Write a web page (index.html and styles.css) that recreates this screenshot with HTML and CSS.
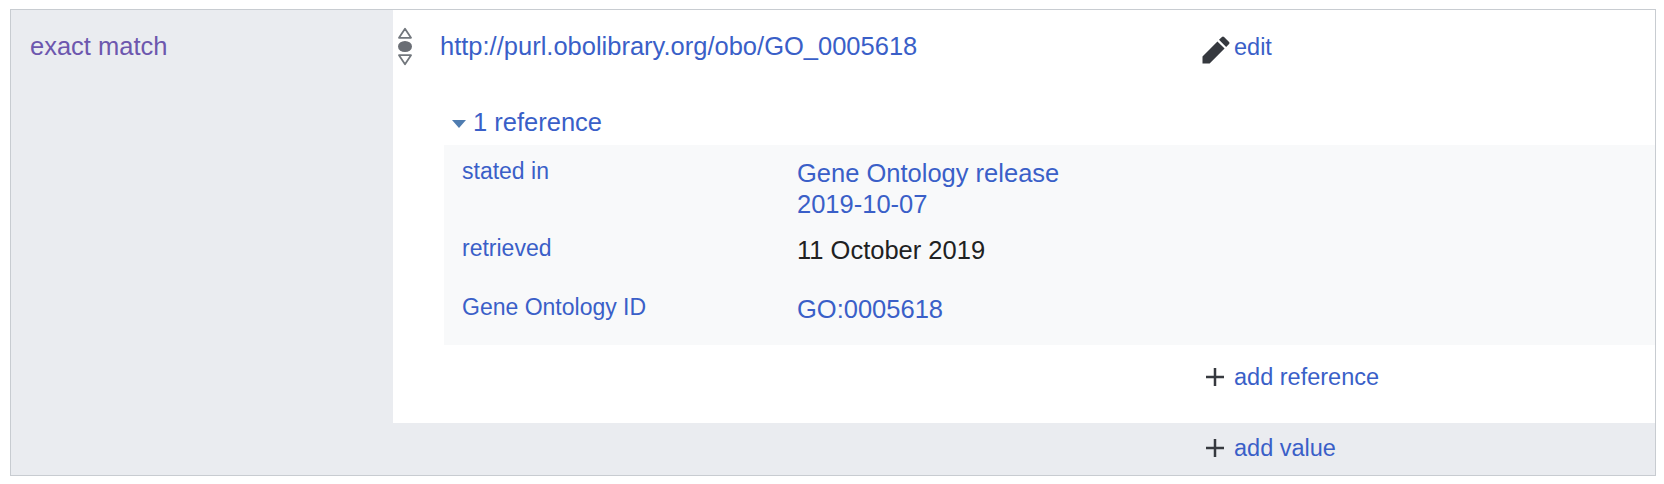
FILE: index.html
```html
<!DOCTYPE html>
<html lang="en">
<head>
  <meta charset="UTF-8">
  <title>exact match</title>
  <link rel="stylesheet" href="styles.css">
</head>
<body>

<div class="statement-group">
  <!-- Property name -->
  <div class="property"><a href="#">exact match</a></div>

  <div class="values">
    <div class="statement">
      <div class="claim">
        <svg class="rank" width="14" height="39" viewBox="0 0 14 39">
          <path d="M1 10.8 L7 1.8 L13 10.8 Z" fill="none" stroke="#72777d" stroke-width="1.8" stroke-linejoin="round"/>
          <ellipse cx="7" cy="19.5" rx="7" ry="5.6" fill="#6a6e75"/>
          <path d="M1 28.2 L7 37.2 L13 28.2 Z" fill="none" stroke="#72777d" stroke-width="1.8" stroke-linejoin="round"/>
        </svg>
        <a class="value" href="#">http://purl.obolibrary.org/obo/GO_0005618</a>
        <div class="action edit-action">
          <svg class="icon" width="30" height="30" viewBox="0 0 20 20">
            <path d="M16.77 8l1.94-2a1 1 0 0 0 0-1.41l-3.34-3.3a1 1 0 0 0-1.41 0L12 3.23zM1 14.25V19h4.75l9.96-9.96-4.75-4.75z" fill="#36393f"/>
          </svg>
          <a href="#">edit</a>
        </div>
      </div>

      <div class="references">
        <a class="toggle" href="#"><span class="arrow"></span>1 reference</a>
        <div class="ref-box">
          <div class="ref-row">
            <a class="ref-prop" href="#">stated in</a>
            <a class="ref-val" href="#">Gene Ontology release<br>2019-10-07</a>
          </div>
          <div class="ref-row">
            <a class="ref-prop" href="#">retrieved</a>
            <span class="ref-val">11 October 2019</span>
          </div>
          <div class="ref-row">
            <a class="ref-prop" href="#">Gene Ontology ID</a>
            <a class="ref-val" href="#">GO:0005618</a>
          </div>
        </div>
      </div>

      <div class="action add-reference">
        <svg class="plus" width="18" height="18" viewBox="0 0 18 18"><path d="M7.75 0h2.5v7.75h7.75v2.5h-7.75v7.75h-2.5v-7.75h-7.75v-2.5h7.75z" fill="#36393f"/></svg>
        <a href="#">add reference</a>
      </div>
    </div>

    <div class="action add-value">
      <svg class="plus" width="18" height="18" viewBox="0 0 18 18"><path d="M7.75 0h2.5v7.75h7.75v2.5h-7.75v7.75h-2.5v-7.75h-7.75v-2.5h7.75z" fill="#36393f"/></svg>
      <a href="#">add value</a>
    </div>
  </div>
</div>

</body>
</html>
```

FILE: styles.css
```css
* {
  box-sizing: border-box;
}

body {
  margin: 0;
  padding: 9px 8px 0 10px;
  font-family: "Liberation Sans", Arial, sans-serif;
  background: #fff;
  color: #202122;
}

a {
  color: #3a5fc8;
  text-decoration: none;
}

.statement-group {
  display: flex;
  height: 467px;
  background: #eaecf0;
  border: 1px solid #c8ccd1;
}

/* Left column */
.property {
  width: 382px;
  padding: 21px 19px;
  font-size: 25.5px;
  line-height: 31px;
}

.property a {
  color: #6d57ae;
}

/* Right column */
.values {
  flex: 1;
}

.statement {
  background: #fff;
  height: 413px;
  padding-top: 17px;
}

.claim {
  display: flex;
  align-items: flex-start;
  padding-left: 5px;
}

.rank {
  flex: none;
  margin-right: 28px;
}

.value {
  width: 760px;
  margin-top: 4px;
  font-size: 25.5px;
  line-height: 31px;
}

.action {
  display: flex;
  align-items: center;
  font-size: 23.5px;
  line-height: 26px;
}

.edit-action {
  margin-top: 2px;
}

.icon {
  margin: 6px 3px 0 1px;
}

.plus {
  margin-right: 10px;
}

/* References */
.references {
  padding: 41px 0 0 51px;
}

.toggle {
  display: block;
  padding-left: 8px;
  font-size: 25.5px;
  line-height: 31px;
}

.arrow {
  display: inline-block;
  width: 0;
  height: 0;
  margin-right: 7px;
  vertical-align: 3px;
  border-left: 7px solid transparent;
  border-right: 7px solid transparent;
  border-top: 8px solid #4f7cb0;
}

.ref-box {
  margin-top: 7px;
  padding: 13px 0 20px 18px;
  background: #f8f9fa;
}

.ref-row {
  display: flex;
  align-items: flex-start;
  margin-bottom: 15px;
}

.ref-row:nth-child(2) {
  margin-bottom: 28px;
}

.ref-row:last-child {
  margin-bottom: 0;
}

.ref-prop {
  width: 335px;
  font-size: 23px;
  line-height: 27px;
}

.ref-val {
  font-size: 25.5px;
  line-height: 31px;
}

.add-reference {
  margin: 19px 0 0 813px;
}

.add-value {
  margin-left: 813px;
  padding-top: 12px;
}
```
